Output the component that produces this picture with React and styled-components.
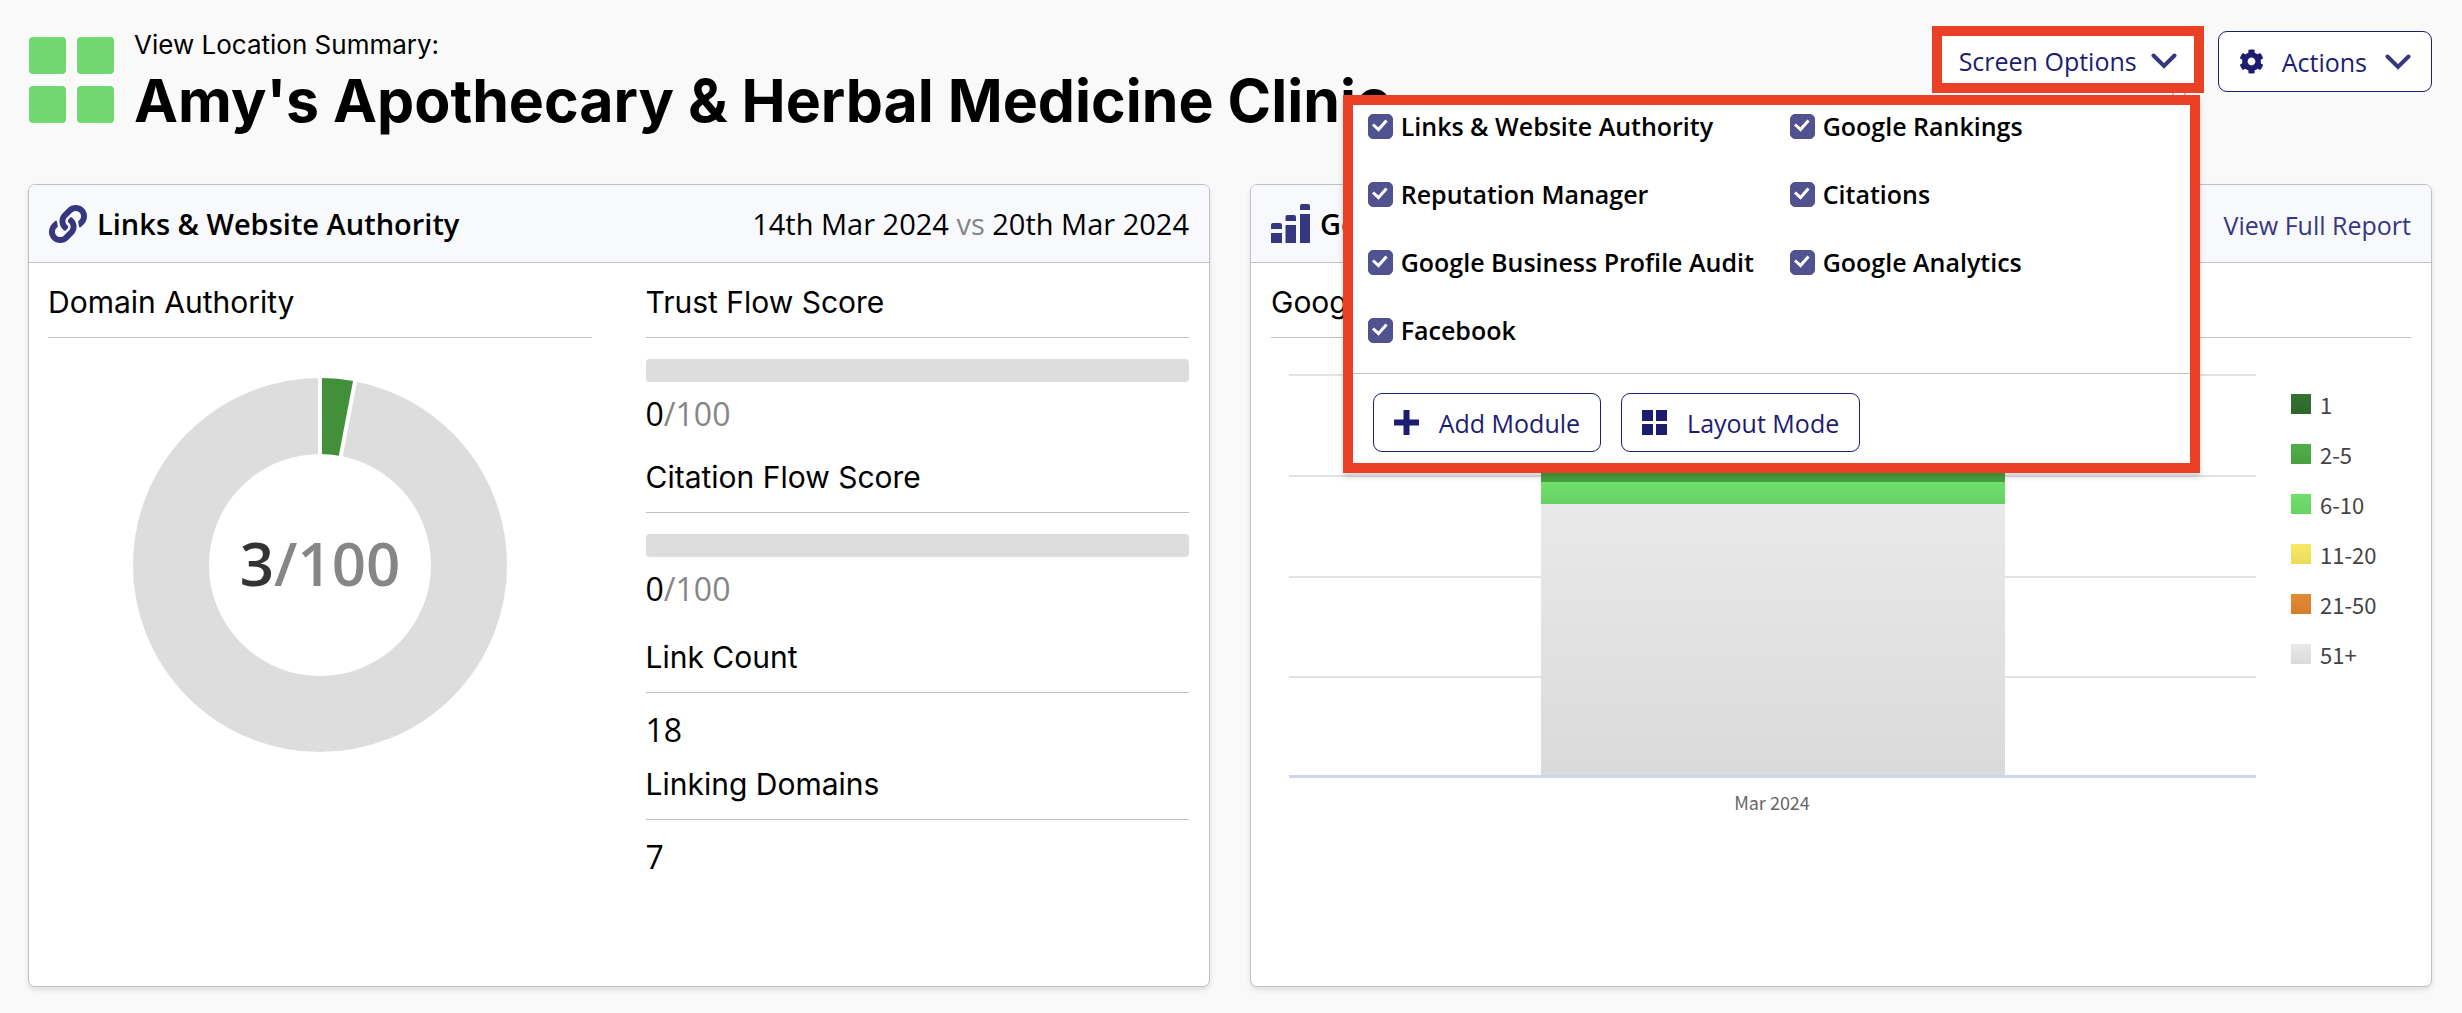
import React, { useState } from "react";
import styled, { createGlobalStyle, css } from "styled-components";
import { FaCog, FaLink } from "react-icons/fa";

const color = {
  page: "#f9f9f9",
  panel: "#ffffff",
  header: "#f8f9fd",
  border: "#c1c1c1",
  text: "#000000",
  muted: "#868686",
  navy: "#1c1d70",
  indigo: "#36377f",
  track: "#dddddd",
  highlight: "#ea4025",
};

const display = css`
  font-family: Inter, "Open Sans", sans-serif;
`;

const GlobalStyle = createGlobalStyle`
  *, *::before, *::after { box-sizing: border-box; }
  body {
    margin: 0;
    background: ${color.page};
    color: ${color.text};
    font-family: "Open Sans", sans-serif;
    font-size: 25px;
  }
  h1, h2, h3, p { margin: 0; font-weight: inherit; }
`;

const Page = styled.div`
  padding: 26px 30px 26px 28px;
`;

const Header = styled.header`
  display: flex;
  align-items: flex-start;
  justify-content: space-between;
  height: 158px;
`;

const Brand = styled.div`
  display: flex;
  gap: 20px;
`;

const BrandIcon = styled.svg`
  width: 86px;
  height: 86px;
  margin-top: 11px;
  fill: #71d770;
`;

const Kicker = styled.p`
  ${display}
  font-size: 26px;
  line-height: 38px;
`;

const Title = styled.h1`
  ${display}
  font-size: 59px;
  font-weight: 700;
  line-height: 74px;
  white-space: nowrap;
`;

const Toolbar = styled.div`
  display: flex;
  align-items: flex-start;
  gap: 14px;
`;

const Dropdown = styled.div`
  position: relative;
`;

const Button = styled.button`
  display: inline-flex;
  align-items: center;
  gap: 20px;
  height: 59px;
  padding: 0 20px;
  border: 1px solid ${color.navy};
  border-radius: 9px;
  background: ${color.panel};
  color: ${color.navy};
  font: inherit;
  white-space: nowrap;
  cursor: pointer;
`;

const ActionsButton = styled(Button)`
  gap: 18px;
  height: 61px;
  margin-top: 5px;
`;

const HighlightButton = styled(Button)`
  gap: 14px;
  height: 67px;
  padding: 2px 17px 0 17px;
  border: 10px solid ${color.highlight};
  border-radius: 0;
`;

const Glyph = styled.svg`
  flex: none;
  width: ${(p) => p.$size || 25}px;
  height: ${(p) => p.$size || 25}px;
  fill: currentColor;
`;

const Chevron = styled.svg`
  flex: none;
  width: 26px;
  height: 16px;
  fill: none;
  stroke: ${color.indigo};
  stroke-width: 4;
  stroke-linecap: round;
  stroke-linejoin: miter;
`;

const OptionsPanel = styled.div`
  position: absolute;
  top: 69px;
  right: 4px;
  z-index: 2;
  width: 857px;
  border: 10px solid ${color.highlight};
  background: ${color.panel};
  box-shadow: 0 4px 6px rgba(0, 0, 0, 0.16);

  &::before {
    content: "";
    position: absolute;
    top: -12px;
    right: 4px;
    width: 14px;
    height: 2px;
    border: solid ${color.border};
    border-width: 0 2px;
    background: ${color.panel};
  }
`;

const OptionsList = styled.div`
  display: grid;
  grid-template-columns: 422px 1fr;
  row-gap: 32px;
  padding: 3px 15px 25px;
`;

const Option = styled.label`
  display: flex;
  align-items: center;
  gap: 8px;
  height: 36px;
  font-weight: 600;
  white-space: nowrap;
`;

const Box = styled.span`
  display: grid;
  width: 25px;
  height: 25px;

  > * {
    grid-area: 1 / 1;
  }
`;

const Tick = styled.input`
  appearance: none;
  width: 25px;
  height: 25px;
  margin: 0;
  border: 1px solid #4f5090;
  border-radius: 5px;
  background: ${color.panel};

  &:checked {
    background: #515290;
  }
`;

const TickMark = styled.svg`
  width: 25px;
  height: 25px;
  fill: none;
  stroke: #ffffff;
  stroke-width: 3;
  pointer-events: none;
`;

const OptionsFooter = styled.div`
  display: flex;
  gap: 20px;
  padding: 19px 20px 11px;
  border-top: 1px solid ${color.border};
`;

const Cards = styled.main`
  display: grid;
  grid-template-columns: 1fr 1fr;
  gap: 40px;
`;

const Card = styled.section`
  min-height: 803px;
  border: 1px solid ${color.border};
  border-radius: 7px;
  background: ${color.panel};
  box-shadow: 0 3px 5px rgba(0, 0, 0, 0.1);
  overflow: hidden;
`;

const CardHeader = styled.div`
  display: flex;
  align-items: center;
  justify-content: space-between;
  height: 78px;
  padding: 0 20px;
  border-bottom: 1px solid ${color.border};
  background: ${color.header};
  font-size: 29px;
`;

const CardTitle = styled.h2`
  display: flex;
  align-items: center;
  gap: 10px;
  font-size: 29px;
  font-weight: 600;

  svg {
    color: ${color.indigo};
  }
`;

const Muted = styled.span`
  color: ${color.muted};
`;

const ReportLink = styled.a`
  padding-top: 2px;
  color: ${color.indigo};
  font-size: 25px;
  text-decoration: none;
`;

const CardBody = styled.div`
  padding: 20px;
`;

const Columns = styled(CardBody)`
  display: grid;
  grid-template-columns: 1fr 1fr;
  gap: 54px;
  padding-left: 19px;
`;

const SubHeading = styled.h3`
  ${display}
  padding-bottom: 16px;
  border-bottom: 1px solid ${color.border};
  font-size: 30px;
  line-height: 38px;
`;

const Donut = styled.svg`
  display: block;
  width: 374px;
  height: 374px;
  margin: 40px auto 0;
  overflow: visible;
`;

const DonutText = styled.text`
  font-size: 60px;
  font-weight: 600;
  text-anchor: middle;
  fill: #333333;

  tspan {
    fill: ${color.muted};
  }
`;

const Score = styled.div`
  margin-bottom: 22px;
`;

const Track = styled.div`
  height: 23px;
  margin: 21px 0 10px;
  border-radius: 4px;
  background: ${color.track};
`;

const Fill = styled.div`
  height: 100%;
  border-radius: 4px;
  background: #43903b;
`;

const Value = styled.p`
  font-size: 32px;
  line-height: 44px;
`;

const Counts = styled.div`
  display: grid;
  gap: 13px;
  padding-top: 5px;

  ${Value} {
    margin-top: 15px;
  }
`;

const ChartRow = styled.div`
  display: flex;
  gap: 35px;
  padding: 36px 0 0 18px;
`;

const Plot = styled.svg`
  flex: 1;
  min-width: 0;
`;

const AxisLabel = styled.text`
  font-family: "Noto Sans CJK JP", sans-serif;
  font-size: 18px;
  text-anchor: middle;
  fill: #666666;
`;

const Legend = styled.ul`
  display: flex;
  flex-direction: column;
  gap: 18px;
  width: 120px;
  margin: 0;
  padding: 14px 0 0;
  list-style: none;
`;

const LegendItem = styled.li`
  display: flex;
  align-items: center;
  gap: 9px;
  height: 32px;
  color: #444444;
  font-family: "Noto Sans CJK JP", sans-serif;
  font-size: 22px;
  line-height: 32px;

  &::before {
    content: "";
    width: 20px;
    height: 20px;
    background: linear-gradient(${(p) => p.$from}, ${(p) => p.$to});
  }
`;

const modules = [
  "Links & Website Authority",
  "Google Rankings",
  "Reputation Manager",
  "Citations",
  "Google Business Profile Audit",
  "Google Analytics",
  "Facebook",
];

const ranks = [
  { label: "1", from: "#357335", to: "#2d652b" },
  { label: "2-5", from: "#52ae4b", to: "#47a03f" },
  { label: "6-10", from: "#70df6e", to: "#66d262" },
  { label: "11-20", from: "#f7e866", to: "#ebdb5b" },
  { label: "21-50", from: "#e48a35", to: "#d67d2b" },
  { label: "51+", from: "#e9e9e9", to: "#dadada" },
];

const ChevronDown = () => (
  <Chevron viewBox="0 0 26 16" aria-hidden="true">
    <path d="M2.5 2.5 L13 13 L23.5 2.5" />
  </Chevron>
);

const BarsIcon = () => (
  <Glyph $size={39} viewBox="0 0 39 39" aria-hidden="true">
    <path d="M0 25V21a2 2 0 0 1 2-2h7a2 2 0 0 1 2 2v4zM0 29h11v10H0zM14.500 17v-4a2 2 0 0 1 2-2h6.500a2 2 0 0 1 2 2v4zM14.500 21H25v18H14.500zM29 6V2a2 2 0 0 1 2-2h6a2 2 0 0 1 2 2v4zM29 10h10v29H29z" />
  </Glyph>
);

function ModuleOption({ name }) {
  const [checked, setChecked] = useState(true);
  return (
    <Option>
      <Box>
        <Tick type="checkbox" checked={checked} onChange={() => setChecked(!checked)} />
        <TickMark viewBox="0 0 25 25" aria-hidden="true">
          <path d="M5 10.500 L10.500 15.500 L18.500 6.500" />
        </TickMark>
      </Box>
      {name}
    </Option>
  );
}

function ScoreBlock({ title, value }) {
  return (
    <Score>
      <SubHeading>{title}</SubHeading>
      <Track>
        <Fill style={{ width: `${value}%` }} />
      </Track>
      <Value>
        {value}
        <Muted>/100</Muted>
      </Value>
    </Score>
  );
}

function CountBlock({ title, value }) {
  return (
    <div>
      <SubHeading>{title}</SubHeading>
      <Value>{value}</Value>
    </div>
  );
}

function AuthorityDonut({ value }) {
  const length = 2 * Math.PI * 149;
  const angle = (value / 100) * 2 * Math.PI;
  return (
    <Donut viewBox="0 0 374 374" role="img" aria-label={`Domain authority ${value} of 100`}>
      <circle cx="187" cy="187" r="149" fill="none" stroke={color.track} strokeWidth="76" />
      <circle
        cx="187"
        cy="187"
        r="149"
        fill="none"
        stroke="#43903b"
        strokeWidth="76"
        strokeDasharray={`${(length * value) / 100} ${length}`}
        transform="rotate(-90 187 187)"
      />
      <g stroke="#ffffff" strokeWidth="4">
        <path d="M187 78V-2" />
        <path
          d={`M${187 + 108 * Math.sin(angle)} ${187 - 108 * Math.cos(angle)}L${187 + 190 * Math.sin(angle)} ${187 - 190 * Math.cos(angle)}`}
        />
      </g>
      <DonutText x="187" y="208">
        {value}
        <tspan>/100</tspan>
      </DonutText>
    </Donut>
  );
}

function RankingsPlot() {
  return (
    <Plot viewBox="0 0 967 450" role="img" aria-label="Google rankings for Mar 2024">
      <defs>
        {ranks.map((r, i) => (
          <linearGradient key={r.label} id={`rank${i}`} x1="0" y1="0" x2="0" y2="1">
            <stop offset="0" stopColor={r.from} />
            <stop offset="1" stopColor={r.to} />
          </linearGradient>
        ))}
      </defs>
      <g fill="#e2e2e2">
        <rect y="0" width="967" height="2" />
        <rect y="101" width="967" height="2" />
        <rect y="202" width="967" height="2" />
        <rect y="302" width="967" height="2" />
      </g>
      <rect x="252" y="30" width="464" height="78" fill="url(#rank1)" />
      <rect x="252" y="108" width="464" height="22" fill="url(#rank2)" />
      <rect x="252" y="130" width="464" height="272" fill="url(#rank5)" />
      <rect y="401" width="967" height="3" fill="#ccd6eb" />
      <AxisLabel x="483" y="436">Mar 2024</AxisLabel>
    </Plot>
  );
}

export default function App() {
  return (
    <>
      <GlobalStyle />
      <Page>
        <Header>
          <Brand>
            <BrandIcon viewBox="0 0 86 86" aria-hidden="true">
              <rect x="1" width="37" height="37" rx="4" />
              <rect x="49" width="37" height="37" rx="4" />
              <rect x="1" y="49" width="37" height="37" rx="4" />
              <rect x="49" y="49" width="37" height="37" rx="4" />
            </BrandIcon>
            <div>
              <Kicker>View Location Summary:</Kicker>
              <Title>Amy's Apothecary &amp; Herbal Medicine Clinic</Title>
            </div>
          </Brand>
          <Toolbar>
            <Dropdown>
              <HighlightButton type="button" aria-expanded="true">
                Screen Options
                <ChevronDown />
              </HighlightButton>
              <OptionsPanel>
                <OptionsList>
                  {modules.map((name) => (
                    <ModuleOption key={name} name={name} />
                  ))}
                </OptionsList>
                <OptionsFooter>
                  <Button type="button">
                    <Glyph viewBox="0 0 25 25" aria-hidden="true">
                      <path d="M9.500 0h6v9.500H25v6h-9.500V25h-6v-9.500H0v-6h9.500z" />
                    </Glyph>
                    Add Module
                  </Button>
                  <Button type="button">
                    <Glyph viewBox="0 0 25 25" aria-hidden="true">
                      <path d="M0 0h11v11H0zM14 0h11v11H14zM0 14h11v11H0zM14 14h11v11H14z" />
                    </Glyph>
                    Layout Mode
                  </Button>
                </OptionsFooter>
              </OptionsPanel>
            </Dropdown>
            <ActionsButton type="button">
              <Glyph as={FaCog} aria-hidden="true" />
              Actions
              <ChevronDown />
            </ActionsButton>
          </Toolbar>
        </Header>
        <Cards>
          <Card>
            <CardHeader>
              <CardTitle>
                <Glyph as={FaLink} $size={38} aria-hidden="true" />
                Links &amp; Website Authority
              </CardTitle>
              <p>
                14th Mar 2024 <Muted>vs</Muted> 20th Mar 2024
              </p>
            </CardHeader>
            <Columns>
              <div>
                <SubHeading>Domain Authority</SubHeading>
                <AuthorityDonut value={3} />
              </div>
              <div>
                <ScoreBlock title="Trust Flow Score" value={0} />
                <ScoreBlock title="Citation Flow Score" value={0} />
                <Counts>
                  <CountBlock title="Link Count" value={18} />
                  <CountBlock title="Linking Domains" value={7} />
                </Counts>
              </div>
            </Columns>
          </Card>
          <Card>
            <CardHeader>
              <CardTitle>
                <BarsIcon />
                Google Rankings
              </CardTitle>
              <ReportLink href="#report">View Full Report</ReportLink>
            </CardHeader>
            <CardBody>
              <SubHeading>Google Rankings</SubHeading>
              <ChartRow>
                <RankingsPlot />
                <Legend>
                  {ranks.map((r) => (
                    <LegendItem key={r.label} $from={r.from} $to={r.to}>
                      {r.label}
                    </LegendItem>
                  ))}
                </Legend>
              </ChartRow>
            </CardBody>
          </Card>
        </Cards>
      </Page>
    </>
  );
}
